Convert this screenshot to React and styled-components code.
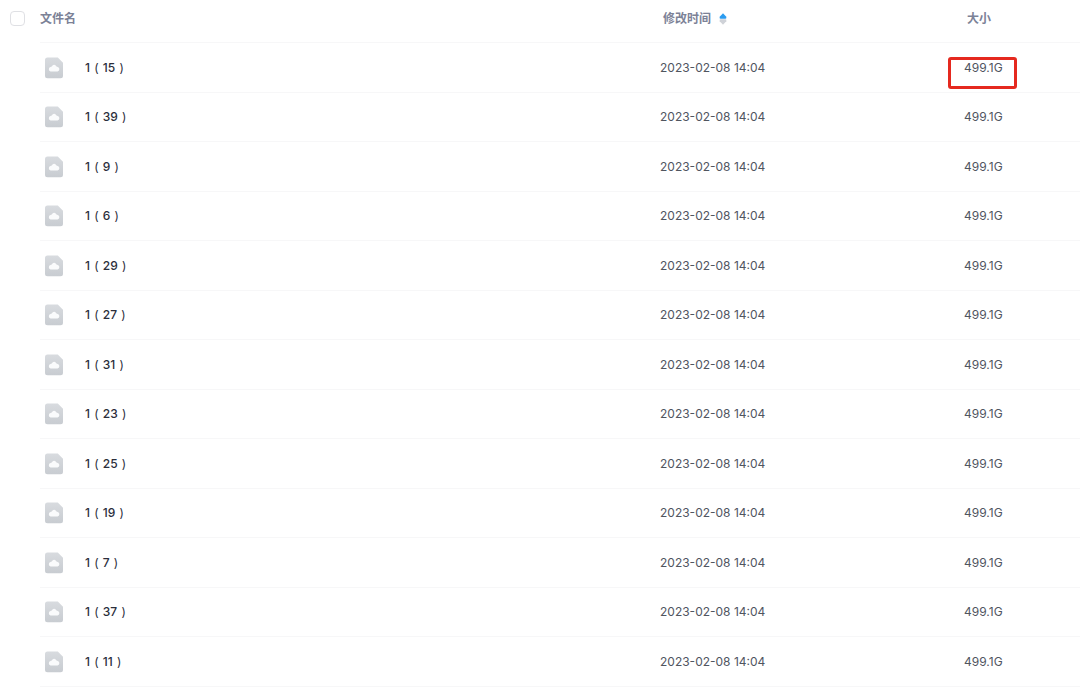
import React from 'react'
import styled, { createGlobalStyle } from 'styled-components'

// ----------------------------------------------------------------------------

const GlobalStyle = createGlobalStyle`
  * {
    box-sizing: border-box;
  }
  body {
    margin: 0;
    background: #fff;
    font-family: Inter, 'Noto Sans CJK SC', sans-serif;
    font-size: 12px;
    line-height: 20px;
    color: #50555f;
  }
`

// ----------------------------------------------------------------------------

const FileTable = styled.table`
  width: 100%;
  table-layout: fixed;
  border-collapse: separate;
  border-spacing: 0;
`

const Col = styled.col`
  width: ${(props) => props.$width};
`

const HeadCell = styled.th`
  height: 43px;
  padding: 0 0 4px ${(props) => (props.$inset ? '3px' : '0')};
  border-bottom: 1px solid ${(props) => (props.$plain ? '#fff' : '#f7f7f8')};
  text-align: left;
  vertical-align: middle;
  font-size: 12px;
  font-weight: 600;
  color: #7c8297;
`

const CheckCell = styled(HeadCell)`
  padding-left: 10px;
  padding-bottom: 6px;
`

const Checkbox = styled.input`
  appearance: none;
  display: block;
  width: 15px;
  height: 15px;
  margin: 0;
  border: 1px solid #dfe0e4;
  border-radius: 4px;
  background: #fff;

  &:checked {
    background: #2c9cf0;
    border-color: #2c9cf0;
  }
`

const SortButton = styled.button`
  display: flex;
  align-items: center;
  gap: 8px;
  padding: 0;
  border: 0;
  background: none;
  font: inherit;
  color: inherit;
  cursor: pointer;
`

const Row = styled.tr`
  height: 50px;

  &:nth-child(even) {
    height: 49px;
  }
`

const Cell = styled.td`
  padding: 0;
  border-bottom: 1px solid ${(props) => (props.$plain ? '#fff' : '#f7f7f8')};
  vertical-align: middle;
`

const FileName = styled.div`
  display: flex;
  align-items: center;
  gap: 22px;
  padding-left: 5px;
  font-weight: 500;
  color: #2b2e3b;
`

const Paren = styled.span`
  padding: 0 1px;
  font-weight: 400;
`

const Size = styled.span`
  position: relative;
`

const Marker = styled.span`
  position: absolute;
  top: -3px;
  left: -16px;
  width: 69px;
  height: 32px;
  border: 3px solid #e5291f;
  border-radius: 3px;
  pointer-events: none;
`

// ----------------------------------------------------------------------------

const FileIcon = () => (
  <svg width="18" height="22" viewBox="0 0 18 22" aria-hidden="true">
    <defs>
      <linearGradient id="sheet" x1="0" y1="0" x2="0" y2="1">
        <stop offset="0" stopColor="#d8dbdf" />
        <stop offset="1" stopColor="#c8ccd1" />
      </linearGradient>
    </defs>
    <path
      d="M2.500 .6H12.800L18 5.800v13A2.500 2.500 0 0 1 15.500 21.300h-13A2.500 2.500 0 0 1 0 18.800V3.100A2.500 2.500 0 0 1 2.500 .6z"
      fill="url(#sheet)"
    />
    <path
      d="M5.600 14.400a2.200 2.200 0 0 1-.1-4.300Q7 9.600 7.500 8.500a2 2 0 0 1 3.200 0Q11.300 9.700 12.700 10.100a2.200 2.200 0 0 1-.2 4.300z"
      fill="#fafbfc"
    />
  </svg>
)

const SortIcon = () => (
  <svg width="8" height="12" viewBox="0 0 8 12" aria-hidden="true">
    <path d="M4 .2L7.300 3.800Q7.800 5.700 6.500 5.700h-5Q.2 5.700 .7 3.800z" fill="#2c9cf0" />
    <path d="M4 11.800L7.300 8.200Q7.800 6.300 6.500 6.300h-5Q.2 6.300 .7 8.200z" fill="#cfd2d8" />
  </svg>
)

// ----------------------------------------------------------------------------

const numbers = [15, 39, 9, 6, 29, 27, 31, 23, 25, 19, 7, 37, 11]

const files = numbers.map((n) => ({
  number: n,
  modified: '2023-02-08 14:04',
  size: '499.1G',
  marked: n === 15,
}))

const App = () => (
  <>
    <GlobalStyle />
    <FileTable>
      <colgroup>
        <Col $width="40px" />
        <Col $width="auto" />
        <Col $width="304px" />
        <Col $width="116px" />
      </colgroup>
      <thead>
        <tr>
          <CheckCell $plain>
            <Checkbox type="checkbox" aria-label="全选" />
          </CheckCell>
          <HeadCell scope="col">文件名</HeadCell>
          <HeadCell scope="col" $inset aria-sort="ascending">
            <SortButton type="button">
              修改时间
              <SortIcon />
            </SortButton>
          </HeadCell>
          <HeadCell scope="col" $inset>
            大小
          </HeadCell>
        </tr>
      </thead>
      <tbody>
        {files.map((file) => (
          <Row key={file.number}>
            <Cell $plain />
            <Cell>
              <FileName>
                <FileIcon />
                <span>
                  1 <Paren>(</Paren> {file.number} <Paren>)</Paren>
                </span>
              </FileName>
            </Cell>
            <Cell>{file.modified}</Cell>
            <Cell>
              <Size>
                {file.size}
                {file.marked && <Marker />}
              </Size>
            </Cell>
          </Row>
        ))}
      </tbody>
    </FileTable>
  </>
)

export default App
